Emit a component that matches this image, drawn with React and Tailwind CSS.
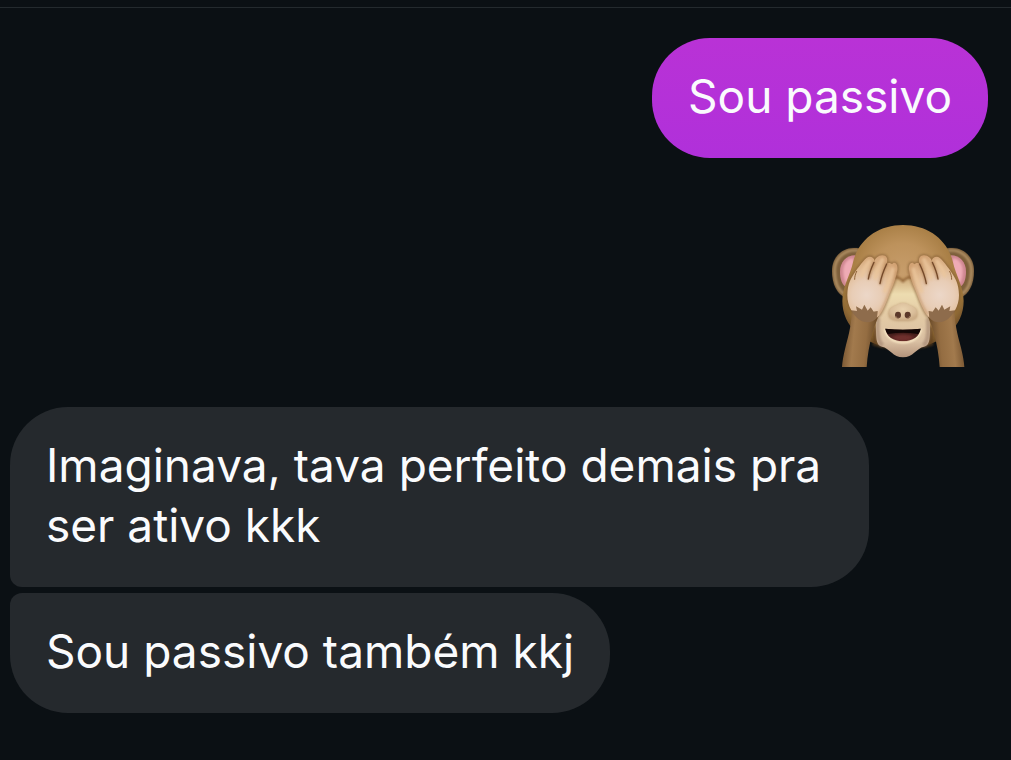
import React from "react";
import clsx from "clsx";

const messages = [
  { id: 1, mine: true, text: "Sou passivo", className: "rounded-[58px]" },
  { id: 2, mine: true, emoji: true, className: "mt-[67px]" },
  {
    id: 3,
    text: "Imaginava, tava perfeito demais pra ser ativo kkk",
    className: "mt-10 rounded-[58px] rounded-bl-[12px]",
  },
  {
    id: 4,
    text: "Sou passivo também kkj",
    className: "mt-[6px] rounded-[58px] rounded-tl-[12px]",
  },
];

const handPath =
  "M82 240 C83 205 93 190 105 172 C114 158 121 150 130 139 C138 127 149 121 158 128 C163 132 164 136 163 140 C166 129 174 122 187 121 C199 121 205 130 200 146 C207 142 213 145 216 148 C223 136 235 148 232 165 C229 184 222 204 214 222 C204 246 196 270 187 286 C182 296 177 303 171 308 L173 288 L161 290 L152 277 L143 287 L133 269 L126 284 L108 274 L111 288 L94 286 C86 272 82 257 82 240 Z";

// one hand and its forearm, the right one is the same drawing mirrored
const Arm = () => (
  <g>
    <path
      d="M94 276 C98 318 86 360 76 398 C70 422 67 440 66 456 H140 C142 424 148 388 158 352 C163 334 170 318 178 298 L172 268 Z"
      fill="url(#arm)"
    />
    <path d={handPath} fill="none" stroke="#6f4a26" strokeWidth="8" opacity="0.45" filter="url(#soft)" />
    <path
      d="M94 284 L111 288 L108 274 L126 284 L133 269 L143 287 L152 277 L161 290 L173 288 L171 308 C150 332 112 324 94 284 Z"
      fill="#8e6c4c"
    />
    <path d={handPath} fill="url(#hand)" />
    {/* finger highlights */}
    <g fill="none" stroke="#ecc79d" strokeLinecap="round" strokeWidth="11" opacity="0.75" filter="url(#soft)">
      <path d="M147 139 C137 153 130 166 125 182" />
      <path d="M187 134 C178 150 170 170 165 188" />
      <path d="M218 163 C214 182 205 205 195 228" />
    </g>
    <g fill="none" strokeLinecap="round">
      <path
        d="M231 170 C226 192 215 218 205 240 C197 260 188 282 178 296"
        stroke="#b27f50"
        strokeWidth="5"
        opacity="0.6"
        filter="url(#soft)"
      />
      <g stroke="#a06f42" strokeWidth="8" opacity="0.6" filter="url(#soft)">
        <path d="M162 144 C155 158 149 172 146 190" />
        <path d="M200 147 C192 165 184 184 181 205" />
      </g>
      <g stroke="#74492a" strokeWidth="4">
        <path d="M162 142 C154 159 148 174 145 192" />
        <path d="M200 147 C191 166 184 184 180 206" />
      </g>
      <path d="M110 169 C106 177 104 184 104 193" stroke="#8e6238" strokeWidth="3" />
    </g>
  </g>
);

const MonkeyEmoji = () => (
  <svg
    role="img"
    aria-label="Macaco tapando os olhos"
    viewBox="36 30 426 426"
    className="block size-[142px]"
  >
    <defs>
      <radialGradient id="head" gradientUnits="userSpaceOnUse" cx="248" cy="175" r="225">
        <stop offset="0" stopColor="#c79d6b" />
        <stop offset="0.4" stopColor="#bd925c" />
        <stop offset="0.65" stopColor="#aa8047" />
        <stop offset="0.85" stopColor="#9b743a" />
        <stop offset="1" stopColor="#73512a" />
      </radialGradient>
      <radialGradient id="hand" gradientUnits="userSpaceOnUse" cx="140" cy="240" r="125">
        <stop offset="0" stopColor="#ecd7c8" />
        <stop offset="0.35" stopColor="#e8cdb6" />
        <stop offset="0.65" stopColor="#e0ba92" />
        <stop offset="1" stopColor="#d2a273" />
      </radialGradient>
      <linearGradient id="arm" x1="0" y1="0.42" x2="1" y2="0.58">
        <stop offset="0" stopColor="#6f4e2c" />
        <stop offset="0.32" stopColor="#a27a4d" />
        <stop offset="0.65" stopColor="#946d42" />
        <stop offset="1" stopColor="#5a3e20" />
      </linearGradient>
      <linearGradient id="face" gradientUnits="userSpaceOnUse" x1="0" y1="190" x2="0" y2="427">
        <stop offset="0" stopColor="#d0ad7d" />
        <stop offset="0.2" stopColor="#eddcb0" />
        <stop offset="0.45" stopColor="#e4cba5" />
        <stop offset="0.8" stopColor="#d9bfa2" />
        <stop offset="1" stopColor="#b3937b" />
      </linearGradient>
      <radialGradient id="snout" cx="0.5" cy="0.35" r="0.6">
        <stop offset="0" stopColor="#e9d2ae" />
        <stop offset="0.7" stopColor="#dabe9a" />
        <stop offset="1" stopColor="#cdae88" />
      </radialGradient>
      <linearGradient id="mouth" x1="0" y1="0" x2="0" y2="1">
        <stop offset="0" stopColor="#240e0c" />
        <stop offset="0.5" stopColor="#4a201d" />
        <stop offset="1" stopColor="#5e2623" />
      </linearGradient>
      <filter id="soft" x="-40%" y="-40%" width="180%" height="180%">
        <feGaussianBlur stdDeviation="3" />
      </filter>
      {/* left ear, reused mirrored for the right one */}
      <g id="ear">
        <path
          d="M116 100 C68 92 36 126 36 168 C36 208 52 238 76 248 L132 230 V104 Z"
          fill="#7d5f3b"
        />
        <path
          d="M116 107 C73 101 44 131 44 168 C44 203 57 227 74 238"
          fill="none"
          stroke="#b59468"
          strokeWidth="7"
          filter="url(#soft)"
        />
        <path d="M106 121 C77 121 60 143 60 170 C60 193 67 211 79 216 L114 170 Z" fill="#cf8791" />
        <path d="M98 129 C77 133 68 152 70 174 C71 190 75 202 81 206 L110 160 Z" fill="#efabb5" filter="url(#soft)" />
      </g>
    </defs>

    <use href="#ear" />
    <use href="#ear" transform="matrix(-1 0 0 1 498 0)" />

    {/* head */}
    <path
      d="M249 30 C174 30 115 74 99 142 C92 178 67 215 67 258 C67 332 127 397 249 402 C371 397 431 332 431 258 C431 215 406 178 399 142 C383 74 324 30 249 30 Z"
      fill="url(#head)"
    />
    <path d="M160 335 H338 L340 391 Q249 420 158 391 Z" fill="#60401f" opacity="0.7" filter="url(#soft)" />

    {/* face */}
    <path
      d="M249 199 C237 185 224 191 211 202 C183 229 166 292 168 350 C169 374 170 391 186 395 C208 399 219 427 249 427 C279 427 290 399 312 395 C328 391 329 374 330 350 C332 292 315 229 287 202 C274 191 261 185 249 199 Z"
      fill="url(#face)"
    />
    <g fill="none" stroke="#9a7c68" strokeWidth="14" opacity="0.55" filter="url(#soft)">
      <path d="M174 310 C171 345 171 380 188 391" />
      <path d="M324 310 C327 345 327 380 310 391" />
    </g>
    <path
      d="M216 190 C229 181 239 188 249 199 C259 188 269 181 282 190"
      fill="none"
      stroke="#94683a"
      strokeWidth="7"
      filter="url(#soft)"
    />
    <path
      d="M205 300 C202 280 219 274 231 270 C243 262 255 262 267 270 C279 274 296 280 293 300 C292 317 273 319 249 319 C225 319 206 317 205 300 Z"
      fill="#a9845c"
      opacity="0.5"
      filter="url(#soft)"
    />
    <path
      d="M207 300 C204 282 219 274 231 270 C243 262 255 262 267 270 C279 274 294 282 291 300 C290 315 273 317 249 317 C225 317 208 315 207 300 Z"
      fill="url(#snout)"
    />
    <ellipse cx="234" cy="300" rx="9" ry="10" fill="#5b3829" />
    <ellipse cx="263" cy="300" rx="9" ry="10" fill="#5b3829" />
    <path d="M227 303 Q228 312 237 310 M270 303 Q269 312 260 310" fill="none" stroke="#a17d60" strokeWidth="3" />

    {/* mouth */}
    <path
      d="M196 342 C200 366 222 381 249 381 C276 381 298 366 302 342"
      fill="none"
      stroke="#fff0cc"
      strokeWidth="8"
      filter="url(#soft)"
    />
    <path
      d="M196 341 Q249 347 302 341 C299 365 278 378 249 378 C220 378 199 365 196 341 Z"
      fill="url(#mouth)"
    />
    <path d="M196 341 Q249 347 302 341 C300 348 297 353 294 357 Q249 350 204 357 C201 353 198 348 196 341 Z" fill="#130706" />
    <path d="M215 366 Q249 350 283 366 Q269 377 249 377 Q229 377 215 366 Z" fill="#7a3430" opacity="0.7" filter="url(#soft)" />

    <Arm />
    <g transform="matrix(-1 0 0 1 499 0)">
      <Arm />
    </g>
  </svg>
);

const Message = ({ message }) => {
  if (message.emoji) {
    return (
      <li className={clsx("mr-[37px] self-end", message.className)}>
        <MonkeyEmoji />
      </li>
    );
  }
  return (
    <li
      className={clsx(
        "max-w-[85%] px-9 pt-7 pb-8",
        message.mine
          ? "mr-[23px] self-end bg-linear-to-b from-[#b932d6] to-[#b030da]"
          : "ml-[10px] self-start bg-[#25292d]",
        message.className
      )}
    >
      <p>{message.text}</p>
    </li>
  );
};

export default function App() {
  return (
    <main className="flex min-h-screen flex-col bg-[#0b1014] pt-[7px] font-['Inter','Liberation_Sans',sans-serif] text-[46px] leading-[60px] text-[#fafbfd]">
      <ul className="flex flex-1 flex-col border-t border-[#242a2e] pt-[30px]">
        {messages.map((message) => (
          <Message key={message.id} message={message} />
        ))}
      </ul>
    </main>
  );
}
